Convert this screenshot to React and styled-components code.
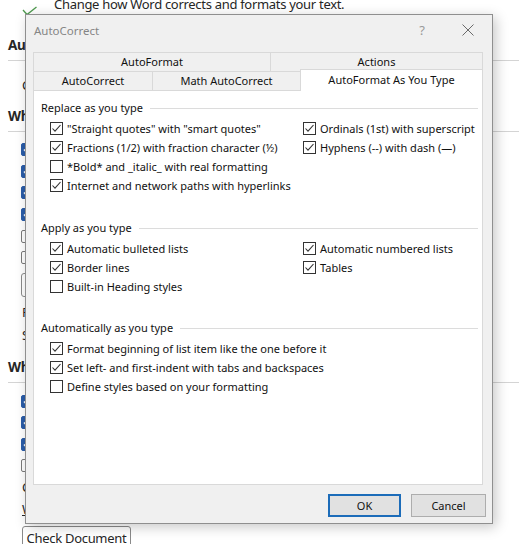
import React from "react"
import styled, { createGlobalStyle } from "styled-components"

const UI_FONT = `"Noto Sans", "Open Sans", sans-serif`

const GlobalStyle = createGlobalStyle`
  html, body {
    margin: 0;
    padding: 0;
    background: #fff;
  }
  body {
    font-family: ${UI_FONT};
  }
`

/* ---------- Word Options page behind the dialog ---------- */

const Page = styled.div`
  position: relative;
  width: 519px;
  height: 544px;
  overflow: hidden;
  background: #fff;
  color: #262626;
`

const Options = styled.div`
  display: flex;
  flex-direction: column;
  padding-left: 8px;
  font-size: 13px;
  letter-spacing: -0.3px;
`

const Intro = styled.div`
  display: flex;
  align-items: flex-start;
  gap: 17px;
  height: 24px;
  margin-top: -8px;
  padding-left: 14px;
`

const IntroIcon = styled.div`
  display: flex;
  flex-direction: column;
  width: 15px;
  font-size: 8px;
  line-height: 10px;
  color: #555;
  font-weight: 700;
  letter-spacing: 0;
`

const IntroText = styled.span`
  font-size: 13px;
  line-height: 24px;
  white-space: nowrap;
`

const Heading = styled.div`
  margin-top: ${(p) => p.$gap}px;
  font-size: 13.5px;
  font-weight: 700;
  line-height: 24px;
  padding-bottom: 3px;
  border-bottom: 1px solid #d4d4d4;
  white-space: nowrap;
`

const Item = styled.div`
  margin-top: ${(p) => p.$gap || 0}px;
  height: 22px;
  line-height: 22px;
  padding-left: 14px;
  white-space: nowrap;
  text-decoration: ${(p) => (p.$underline ? "underline" : "none")};
`

const OptionRow = styled.div`
  display: flex;
  align-items: center;
  gap: 7px;
  height: ${(p) => p.$h}px;
  margin-top: ${(p) => p.$gap || 0}px;
  padding-left: 13px;
  white-space: nowrap;
`

const BlueBox = styled.span`
  display: flex;
  align-items: center;
  justify-content: center;
  width: 13px;
  height: 13px;
  box-sizing: border-box;
  border-radius: 2px;
  background: ${(p) => (p.$on ? "#2a5ca8" : "#fff")};
  border: 1px solid ${(p) => (p.$on ? "#2a5ca8" : "#7a7a7a")};
`

const PageButton = styled.div`
  margin-top: ${(p) => p.$gap}px;
  margin-left: 13px;
  height: 24px;
  width: 150px;
  box-sizing: border-box;
  border: 1px solid #8a8a8a;
  border-radius: 3px;
  line-height: 22px;
  padding-left: 8px;
  white-space: nowrap;
`

const BottomButton = styled.div`
  margin-top: 6px;
  margin-left: 14px;
  width: 109px;
  height: 24px;
  box-sizing: border-box;
  border: 1px solid #8a8a8a;
  border-radius: 3px;
  text-align: center;
  line-height: 22px;
  white-space: nowrap;
`

function PageCheck({ on, children, h = 21.6, gap }) {
  return (
    <OptionRow $h={h} $gap={gap}>
      <BlueBox $on={on}>
        {on && (
          <svg width="9" height="9" viewBox="0 0 9 9">
            <polyline points="1,4.5 3.5,7 8,1.5" fill="none" stroke="#fff" strokeWidth="1.6" />
          </svg>
        )}
      </BlueBox>
      {children}
    </OptionRow>
  )
}

/* ---------- AutoCorrect dialog ---------- */

const Dialog = styled.div`
  position: absolute;
  left: 25px;
  top: 14px;
  width: 468px;
  height: 510px;
  box-sizing: border-box;
  border: 1px solid #8f8f8f;
  background: #f0f0f0;
  box-shadow: 3px 3px 12px rgba(0, 0, 0, 0.22);
  display: flex;
  flex-direction: column;
  font-family: ${UI_FONT};
  font-size: 11px;
  color: #111;
`

const TitleBar = styled.div`
  display: flex;
  align-items: center;
  height: 30px;
  padding: 0 10px 0 8px;
  flex-shrink: 0;
`

const Title = styled.span`
  font-size: 11.5px;
  color: #858585;
`

const TitleButtons = styled.div`
  display: flex;
  align-items: center;
  margin-left: auto;
  gap: 22px;
`

const HelpButton = styled.span`
  width: 20px;
  text-align: center;
  font-size: 13px;
  color: #9a9a9a;
`

const CloseButton = styled.span`
  display: flex;
  justify-content: center;
  width: 28px;
`

const Body = styled.div`
  flex: 1;
  display: flex;
  flex-direction: column;
  padding: 7px 9px 0 7px;
  min-height: 0;
`

const TabRow = styled.div`
  display: flex;
  align-items: flex-start;
  height: 19px;
`

const Tab = styled.div`
  position: relative;
  width: ${(p) => p.$w}px;
  height: ${(p) => (p.$active ? 22 : 19)}px;
  margin-top: ${(p) => (p.$active ? -2 : 0)}px;
  margin-left: ${(p) => (p.$first ? 0 : -1)}px;
  box-sizing: border-box;
  border: 1px solid #d9d9d9;
  border-bottom: none;
  background: ${(p) => (p.$active ? "#fff" : "#f0f0f0")};
  z-index: ${(p) => (p.$active ? 1 : 0)};
  text-align: center;
  line-height: ${(p) => (p.$active ? 20 : 18)}px;
  white-space: nowrap;
`

const Panel = styled.div`
  flex: 1;
  background: #fff;
  border: 1px solid #d9d9d9;
  padding: 9px 4px 0 7px;
  box-sizing: border-box;
`

const Group = styled.div`
  margin-top: ${(p) => p.$gap || 0}px;
`

const Legend = styled.div`
  display: flex;
  align-items: center;
  height: 16px;
  line-height: 16px;
  white-space: nowrap;
`

const LegendLine = styled.span`
  flex: 1;
  height: 1px;
  margin-left: 7px;
  background: #dcdcdc;
`

const Columns = styled.div`
  display: flex;
  margin-top: 3px;
  padding-left: 9px;
`

const Column = styled.div`
  display: flex;
  flex-direction: column;
  width: ${(p) => (p.$w ? `${p.$w}px` : "auto")};
`

const CheckRow = styled.label`
  display: flex;
  align-items: center;
  gap: 4px;
  height: 19px;
  white-space: nowrap;
`

const Box = styled.span`
  display: flex;
  align-items: center;
  justify-content: center;
  width: 13px;
  height: 13px;
  box-sizing: border-box;
  border: 1px solid #333;
  background: #fff;
  flex-shrink: 0;
`

const Footer = styled.div`
  display: flex;
  justify-content: flex-end;
  gap: 10px;
  height: 38px;
  box-sizing: border-box;
  padding: 9px 6px 6px;
  flex-shrink: 0;
`

const Button = styled.div`
  width: ${(p) => p.$w}px;
  height: 23px;
  box-sizing: border-box;
  border: ${(p) => (p.$default ? "2px solid #1c6cb9" : "1px solid #adadad")};
  background: #e1e1e1;
  display: flex;
  align-items: center;
  justify-content: center;
`

function Check({ on, children }) {
  return (
    <CheckRow>
      <Box>
        {on && (
          <svg width="11" height="11" viewBox="0 0 11 11">
            <polyline points="1.5,5.5 4,8.2 9.5,2" fill="none" stroke="#333" strokeWidth="1.1" />
          </svg>
        )}
      </Box>
      {children}
    </CheckRow>
  )
}

export default function App() {
  return (
    <Page>
      <GlobalStyle />
      <Options>
        <Intro>
          <IntroIcon>
            <span>ABC</span>
            <svg width="15" height="14" viewBox="0 0 15 14">
              <polyline points="1,8 5,12.5 14.5,5" fill="none" stroke="#4f9a4f" strokeWidth="1.3" />
            </svg>
          </IntroIcon>
          <IntroText>Change how Word corrects and formats your text.</IntroText>
        </Intro>

        <Heading $gap={17}>AutoCorrect options</Heading>
        <Item $gap={13}>Change how Word corrects and formats text as you type:</Item>

        <Heading $gap={8}>When correcting spelling in Microsoft Office programs</Heading>
        <PageCheck on gap={7}>Ignore words in UPPERCASE</PageCheck>
        <PageCheck on>Ignore words that contain numbers</PageCheck>
        <PageCheck on>Ignore Internet and file addresses</PageCheck>
        <PageCheck on>Flag repeated words</PageCheck>
        <PageCheck>Enforce accented uppercase in French</PageCheck>
        <PageCheck>Suggest from main dictionary only</PageCheck>
        <PageButton $gap={4}>Custom Dictionaries...</PageButton>
        <Item $gap={4}>French modes:</Item>
        <Item $gap={1}>Spanish modes:</Item>

        <Heading $gap={9}>When correcting spelling and grammar in Word</Heading>
        <PageCheck on h={21.4} gap={8}>Check spelling as you type</PageCheck>
        <PageCheck on h={21.4}>Mark grammar errors as you type</PageCheck>
        <PageCheck on h={21.4}>Frequently confused words</PageCheck>
        <PageCheck h={21.4}>Check grammar with spelling</PageCheck>
        <Item>Choose the checks Editor will perform</Item>
        <Item $underline>Writing Style:</Item>
        <BottomButton>Check Document</BottomButton>
      </Options>

      <Dialog>
        <TitleBar>
          <Title>AutoCorrect</Title>
          <TitleButtons>
            <HelpButton>?</HelpButton>
            <CloseButton>
              <svg width="12" height="12" viewBox="0 0 12 12">
                <path d="M0.5 0.5 L11.5 11.5 M11.5 0.5 L0.5 11.5" stroke="#6a6a6a" strokeWidth="1" />
              </svg>
            </CloseButton>
          </TitleButtons>
        </TitleBar>

        <Body>
          <TabRow>
            <Tab $w={238} $first>AutoFormat</Tab>
            <Tab $w={213}>Actions</Tab>
          </TabRow>
          <TabRow>
            <Tab $w={120} $first>AutoCorrect</Tab>
            <Tab $w={149}>Math AutoCorrect</Tab>
            <Tab $w={183} $active>AutoFormat As You Type</Tab>
          </TabRow>

          <Panel>
            <Group>
              <Legend>
                Replace as you type
                <LegendLine />
              </Legend>
              <Columns>
                <Column $w={253}>
                  <Check on>"Straight quotes" with "smart quotes"</Check>
                  <Check on>Fractions (1/2) with fraction character (½)</Check>
                  <Check>*Bold* and _italic_ with real formatting</Check>
                  <Check on>Internet and network paths with hyperlinks</Check>
                </Column>
                <Column>
                  <Check on>Ordinals (1st) with superscript</Check>
                  <Check on>Hyphens (--) with dash (—)</Check>
                </Column>
              </Columns>
            </Group>

            <Group $gap={25}>
              <Legend>
                Apply as you type
                <LegendLine />
              </Legend>
              <Columns>
                <Column $w={253}>
                  <Check on>Automatic bulleted lists</Check>
                  <Check on>Border lines</Check>
                  <Check>Built-in Heading styles</Check>
                </Column>
                <Column>
                  <Check on>Automatic numbered lists</Check>
                  <Check on>Tables</Check>
                </Column>
              </Columns>
            </Group>

            <Group $gap={24}>
              <Legend>
                Automatically as you type
                <LegendLine />
              </Legend>
              <Columns>
                <Column>
                  <Check on>Format beginning of list item like the one before it</Check>
                  <Check on>Set left- and first-indent with tabs and backspaces</Check>
                  <Check>Define styles based on your formatting</Check>
                </Column>
              </Columns>
            </Group>
          </Panel>
        </Body>

        <Footer>
          <Button $w={73} $default>OK</Button>
          <Button $w={75}>Cancel</Button>
        </Footer>
      </Dialog>
    </Page>
  )
}
